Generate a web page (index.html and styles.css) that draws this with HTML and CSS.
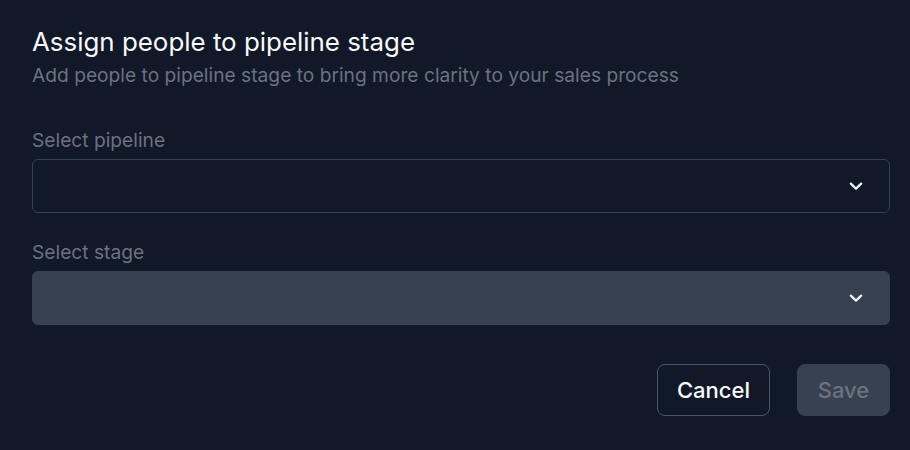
FILE: index.html
```html
<!DOCTYPE html>
<html>
<head>
<meta charset="utf-8">
<link rel="stylesheet" href="styles.css">
</head>
<body>
<div class="modal">
  <h1 class="title">Assign people to pipeline stage</h1>
  <p class="subtitle">Add people to pipeline stage to bring more clarity to your sales process</p>
  <div class="field">
    <label class="label">Select pipeline</label>
    <div class="select">
      <svg class="chev" width="14" height="14" viewBox="0 0 14 14"><path d="M1.8 4.6 L7 9.6 L12.2 4.6" fill="none" stroke="#f3f4f6" stroke-width="2.2" stroke-linecap="round" stroke-linejoin="round"/></svg>
    </div>
  </div>
  <div class="field">
    <label class="label">Select stage</label>
    <div class="select disabled">
      <svg class="chev" width="14" height="14" viewBox="0 0 14 14"><path d="M1.8 4.6 L7 9.6 L12.2 4.6" fill="none" stroke="#f3f4f6" stroke-width="2.2" stroke-linecap="round" stroke-linejoin="round"/></svg>
    </div>
  </div>
  <div class="actions">
    <button class="btn cancel">Cancel</button>
    <button class="btn save">Save</button>
  </div>
</div>
</body>
</html>
```
FILE: styles.css
```css
html, body {
  margin: 0;
  padding: 0;
  background: #111827;
  font-family: Inter, "Noto Sans", sans-serif;
}
.modal {
  padding: 26px 20px 0 32px;
}
.title {
  margin: 0;
  font-size: 25.9px;
  font-weight: 400;
  line-height: 32px;
  color: #f9fafb;
}
.subtitle {
  margin: 2px 0 0;
  font-size: 19.2px;
  line-height: 30px;
  color: #6b7280;
}
.field {
  margin-top: 37px;
}
.field + .field {
  margin-top: 26px;
}
.label {
  display: block;
  font-size: 19.2px;
  line-height: 26px;
  color: #6b7280;
  margin-bottom: 6px;
}
.select {
  height: 54px;
  box-sizing: border-box;
  border: 1px solid #374151;
  border-radius: 6px;
  display: flex;
  align-items: center;
  justify-content: flex-end;
  padding-right: 26px;
}
.select.disabled {
  background: #374151;
}
.chev {
  display: block;
}
.actions {
  display: flex;
  justify-content: flex-end;
  gap: 27px;
  margin-top: 39px;
}
.btn {
  height: 52px;
  box-sizing: border-box;
  border-radius: 8px;
  font-family: Inter, "Noto Sans", sans-serif;
  font-size: 22px;
  font-weight: 500;
  padding: 0 18px;
}
.cancel {
  background: #111827;
  border: 1px solid #4b5563;
  color: #f9fafb;
  width: 113px;
}
.save {
  background: #374151;
  border: 1px solid #374151;
  color: #6b7280;
  width: 93px;
}
```
